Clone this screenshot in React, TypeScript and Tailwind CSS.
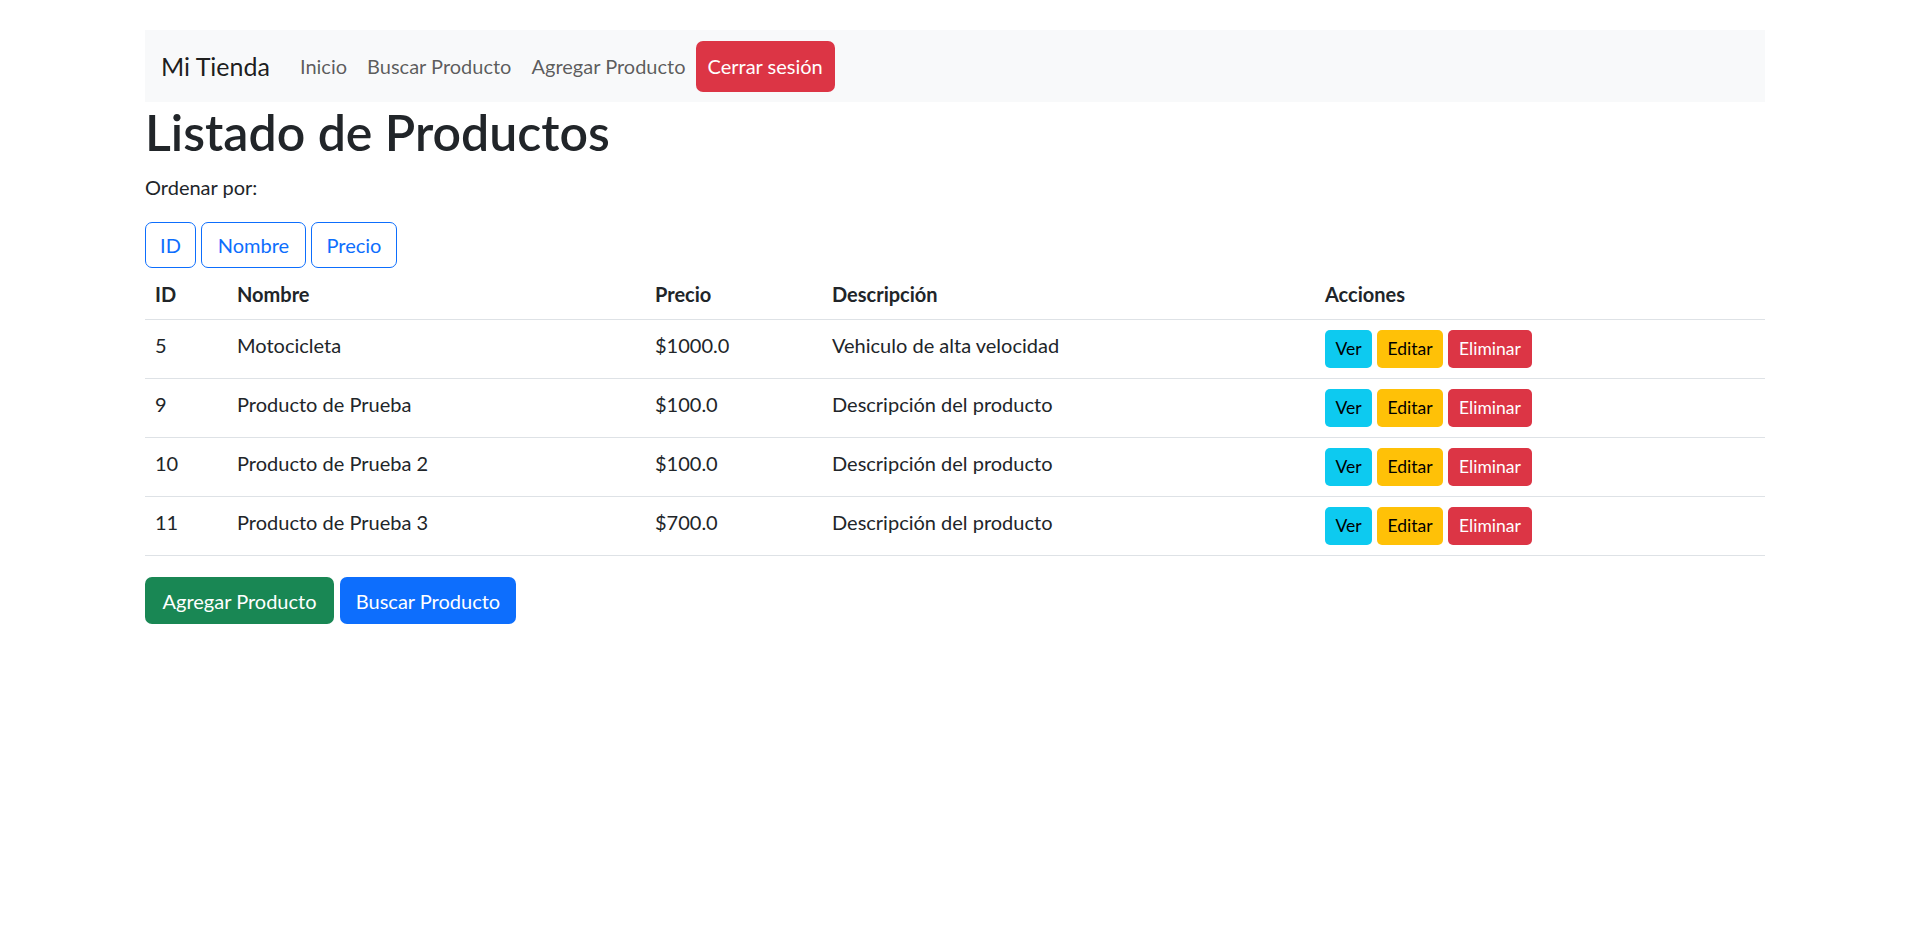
import React from "react";

type Producto = {
  id: number;
  nombre: string;
  precio: string;
  descripcion: string;
};

const productos: Producto[] = [
  { id: 5, nombre: "Motocicleta", precio: "$1000.0", descripcion: "Vehiculo de alta velocidad" },
  { id: 9, nombre: "Producto de Prueba", precio: "$100.0", descripcion: "Descripción del producto" },
  { id: 10, nombre: "Producto de Prueba 2", precio: "$100.0", descripcion: "Descripción del producto" },
  { id: 11, nombre: "Producto de Prueba 3", precio: "$700.0", descripcion: "Descripción del producto" },
];

const Navbar = () => (
  <nav className="flex h-[72px] items-center bg-[#f8f9fa] px-[16px]">
    <a href="#" className="mr-[20px] text-[25px] leading-[37px] text-black/90">
      Mi Tienda
    </a>
    <ul className="flex items-center text-[20px] leading-[30px]">
      <li>
        <a href="#" className="block px-[10px] py-[10px] text-black/65">Inicio</a>
      </li>
      <li>
        <a href="#" className="block px-[10px] py-[10px] text-black/65">Buscar Producto</a>
      </li>
      <li>
        <a href="#" className="block px-[10px] py-[10px] text-black/65">Agregar Producto</a>
      </li>
      <li>
        <button className="h-[51px] rounded-[7px] bg-[#dc3545] px-[12px] text-white">
          Cerrar sesión
        </button>
      </li>
    </ul>
  </nav>
);

const SortButtons = () => (
  <div className="flex gap-[5px] text-[20px] leading-[30px]">
    <button className="h-[46px] w-[51px] rounded-[7px] border border-[#0d6efd] text-[#0d6efd]">ID</button>
    <button className="h-[46px] w-[105px] rounded-[7px] border border-[#0d6efd] text-[#0d6efd]">Nombre</button>
    <button className="h-[46px] w-[86px] rounded-[7px] border border-[#0d6efd] text-[#0d6efd]">Precio</button>
  </div>
);

const ProductTable = () => (
  <table className="w-full border-collapse text-left text-[20px] leading-[30px] text-[#212529]">
    <thead>
      <tr className="border-b border-[#dee2e6]">
        <th className="w-[82px] px-[10px] py-[10px] font-bold">ID</th>
        <th className="w-[418px] px-[10px] py-[10px] font-bold">Nombre</th>
        <th className="w-[177px] px-[10px] py-[10px] font-bold">Precio</th>
        <th className="w-[493px] px-[10px] py-[10px] font-bold">Descripción</th>
        <th className="px-[10px] py-[10px] font-bold">Acciones</th>
      </tr>
    </thead>
    <tbody>
      {productos.map((p) => (
        <tr key={p.id} className="h-[59px] border-b border-[#dee2e6]">
          <td className="px-[10px] pt-[10px] align-top">{p.id}</td>
          <td className="px-[10px] pt-[10px] align-top">{p.nombre}</td>
          <td className="px-[10px] pt-[10px] align-top">{p.precio}</td>
          <td className="px-[10px] pt-[10px] align-top">{p.descripcion}</td>
          <td className="px-[10px] py-[10px] align-top">
            <div className="flex gap-[5px] text-[17.5px] leading-[26px]">
              <button className="h-[38px] w-[47px] rounded-[5px] bg-[#0dcaf0] text-black">Ver</button>
              <button className="h-[38px] w-[66px] rounded-[5px] bg-[#ffc107] text-black">Editar</button>
              <button className="h-[38px] w-[84px] rounded-[5px] bg-[#dc3545] text-white">Eliminar</button>
            </div>
          </td>
        </tr>
      ))}
    </tbody>
  </table>
);

export default function App() {
  return (
    <div className="min-h-screen bg-white font-['Lato',sans-serif] text-[#212529]">
      <div className="mx-auto w-[1620px] pt-[30px]">
        <Navbar />
        <h1 className="mb-[10px] text-[50px] font-semibold leading-[60px]">Listado de Productos</h1>
        <p className="mb-[20px] text-[20px] leading-[30px]">Ordenar por:</p>
        <SortButtons />
        <div className="mt-[1px]">
          <ProductTable />
        </div>
        <div className="mt-[21px] flex gap-[6px] text-[20px] leading-[30px]">
          <button className="h-[47px] w-[189px] rounded-[7px] bg-[#198754] text-white">Agregar Producto</button>
          <button className="h-[47px] w-[176px] rounded-[7px] bg-[#0d6efd] text-white">Buscar Producto</button>
        </div>
      </div>
    </div>
  );
}
